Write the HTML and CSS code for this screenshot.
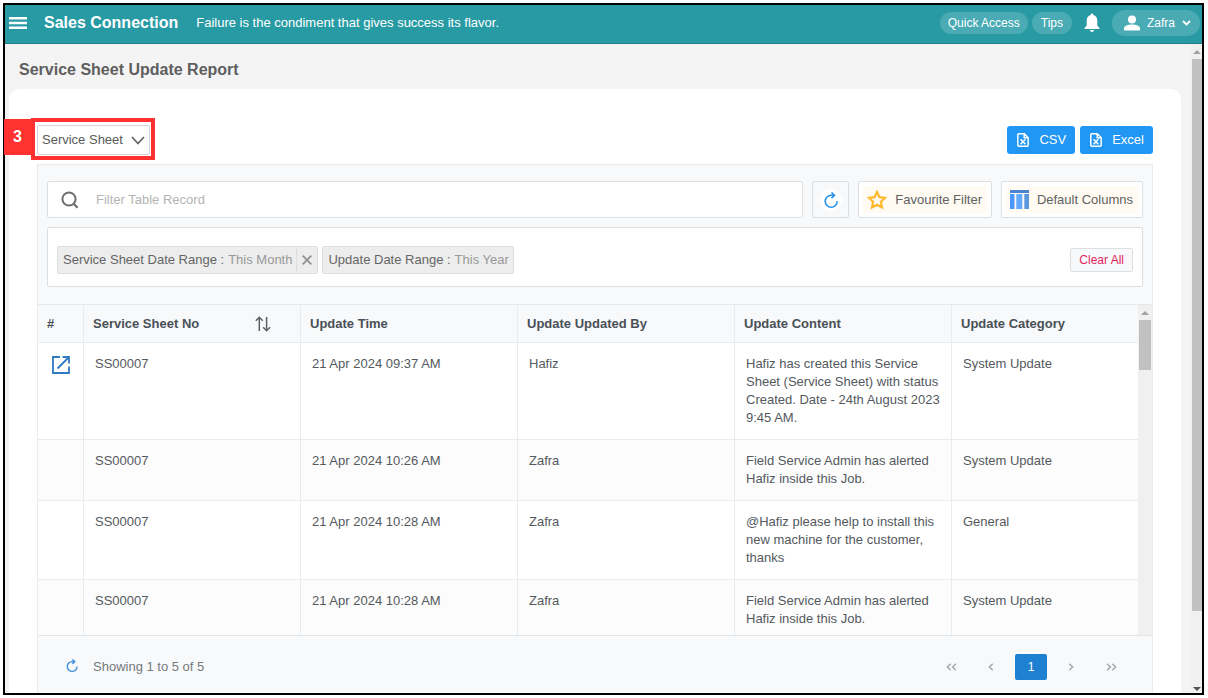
FILE: index.html
```html
<!DOCTYPE html>
<html lang="en">
<head>
<meta charset="utf-8">
<title>Service Sheet Update Report</title>
<link rel="stylesheet" href="styles.css">
</head>
<body>
<div class="frame">
  <header class="topbar">
    <button class="menu" aria-label="Menu"><svg width="18" height="12" viewBox="0 0 18 12"><path d="M0 1.300h18M0 6h18M0 10.700h18" stroke="#fff" stroke-width="2.600"/></svg></button>
    <a class="brand" href="#">Sales Connection</a>
    <p class="tagline">Failure is the condiment that gives success its flavor.</p>
    <nav class="topnav">
      <button class="pill quick">Quick Access</button>
      <button class="pill tips">Tips</button>
      <button class="bell" aria-label="Notifications"><svg width="16" height="20" viewBox="0 0 16 20"><path d="M8 0.5c.9 0 1.3.6 1.3 1.5 2.6.7 4 2.8 4 5.4v5l2.2 2.6v1H.5v-1l2.2-2.6v-5C2.700 4.800 4.100 2.700 6.700 2c0-.9.4-1.500 1.300-1.500zM6 17h4c0 1.300-.9 2-2 2s-2-.7-2-2z" fill="#fff"/></svg></button>
      <button class="pill user">
        <svg width="16" height="16" viewBox="0 0 16 16"><circle cx="8" cy="4.500" r="4" fill="#fff"/><path d="M0 15.500v-2c0-2.600 4-4 8-4s8 1.400 8 4v2z" fill="#fff"/></svg>
        <span>Zafra</span>
        <svg width="9" height="6" viewBox="0 0 9 6"><path d="M1 1l3.500 3.500L8 1" fill="none" stroke="#fff" stroke-width="1.800"/></svg>
      </button>
    </nav>
  </header>
  <div class="body">
    <main class="page">
      <h1>Service Sheet Update Report</h1>
      <section class="card">
        <div class="actions">
          <div class="picker">
            <select aria-label="Report type"><option>Service Sheet</option></select>
            <svg class="caret" width="14" height="9" viewBox="0 0 14 9"><path d="M1 1l6 6.500L13 1" fill="none" stroke="#666" stroke-width="1.800"/></svg>
            <span class="outline"></span>
            <span class="step">3</span>
          </div>
          <div class="exports">
            <button class="export"><svg width="12" height="14" viewBox="0 0 12 14" fill="none" stroke="#fff" stroke-width="1.500"><path d="M2 .8h5.300L11.200 4.700V12.200a1 1 0 0 1-1 1H1.800a1 1 0 0 1-1-1V1.800a1 1 0 0 1 1-1zM7.200 1v3.800H11"/><path d="M3.600 6.300l4.800 5M8.400 6.300l-4.800 5"/></svg>CSV</button>
            <button class="export"><svg width="12" height="14" viewBox="0 0 12 14" fill="none" stroke="#fff" stroke-width="1.500"><path d="M2 .8h5.300L11.200 4.700V12.200a1 1 0 0 1-1 1H1.800a1 1 0 0 1-1-1V1.800a1 1 0 0 1 1-1zM7.200 1v3.800H11"/><path d="M3.600 6.300l4.800 5M8.400 6.300l-4.800 5"/></svg>Excel</button>
          </div>
        </div>
        <div class="panel">
          <div class="tools">
            <div class="searchrow">
              <label class="search">
                <svg width="18" height="18" viewBox="0 0 18 18" fill="none" stroke="#6e6e6e"><circle cx="8" cy="8" r="6.600" stroke-width="2"/><path d="M12.600 12.800l4 4" stroke-width="2.200"/></svg>
                <input type="text" placeholder="Filter Table Record" aria-label="Filter Table Record">
              </label>
              <button class="refresh" aria-label="Refresh"><span class="disc"><svg width="14" height="16" viewBox="0 0 14 16" fill="none" stroke="#2492ec" stroke-width="1.600"><path d="M13.200 9.200A6 6 0 1 1 7.200 3.200h3"/><path d="M7.500.5l2.900 2.700-2.900 2.900"/></svg></span></button>
              <button class="tool"><span class="fill"><svg width="20" height="20" viewBox="0 0 20 20"><path d="M10 2l2.400 5.200 5.600.7-4.100 3.900 1.100 5.700-5-2.800-5 2.800 1.100-5.700L2 7.900l5.600-.7z" fill="none" stroke="#ffb92e" stroke-width="2.200"/></svg>Favourite Filter</span></button>
              <button class="tool wide"><span class="fill"><svg width="19" height="19" viewBox="0 0 19 19"><path d="M0 0h19v3H0z" fill="#4a86cf"/><path d="M0 4h4.500v15H0z" fill="#4a98ff"/><path d="M6.300 4h6v15h-6z" fill="#62aaff"/><path d="M14.300 4H19v15h-4.700z" fill="#5a97df"/></svg>Default Columns</span></button>
            </div>
            <div class="filters">
              <span class="chip"><span class="name">Service Sheet Date Range :</span><span class="val">This Month</span><button class="close" aria-label="Remove filter"><svg width="10" height="10" viewBox="0 0 10 10"><path d="M.7.7l8.600 8.600M9.300.7L.7 9.300" stroke="#929292" stroke-width="1.800"/></svg></button></span>
              <span class="chip"><span class="name">Update Date Range :</span><span class="val">This Year</span></span>
              <button class="clear">Clear All</button>
            </div>
          </div>
          <div class="tablebox">
            <div class="viewport">
              <table>
                <colgroup><col class="num"><col class="std"><col class="std"><col class="std"><col class="std"><col></colgroup>
                <thead><tr>
                  <th>#</th>
                  <th><div class="sort"><span>Service Sheet No</span><svg width="16" height="16" viewBox="0 0 16 16" fill="none" stroke="#5b6067" stroke-width="1.500"><path d="M4.300 15V1.500M.8 4.700l3.500-3.500 3.500 3.500M11.600 1v13.500M8.200 11.300l3.400 3.500 3.500-3.500"/></svg></div></th>
                  <th>Update Time</th><th>Update Updated By</th><th>Update Content</th><th>Update Category</th>
                </tr></thead>
                <tbody>
                  <tr><td class="open"><a href="#" aria-label="Open record"><svg width="18" height="18" viewBox="0 0 18 18" fill="none" stroke="#2f79c2" stroke-width="1.800"><path d="M8 1H1v16h16v-6.500M10.500 1H17v6.500M17 1L5.500 12.500"/></svg></a></td><td>SS00007</td><td>21 Apr 2024 09:37 AM</td><td>Hafiz</td><td>Hafiz has created this Service Sheet (Service Sheet) with status Created. Date - 24th August 2023 9:45 AM.</td><td>System Update</td></tr>
                  <tr><td></td><td>SS00007</td><td>21 Apr 2024 10:26 AM</td><td>Zafra</td><td>Field Service Admin has alerted Hafiz inside this Job.</td><td>System Update</td></tr>
                  <tr><td></td><td>SS00007</td><td>21 Apr 2024 10:28 AM</td><td>Zafra</td><td>@Hafiz please help to install this new machine for the customer, thanks</td><td>General</td></tr>
                  <tr><td></td><td>SS00007</td><td>21 Apr 2024 10:28 AM</td><td>Zafra</td><td>Field Service Admin has alerted Hafiz inside this Job.</td><td>System Update</td></tr>
                </tbody>
              </table>
            </div>
            <div class="bar inner"><i class="up"></i><i class="thumb"></i></div>
          </div>
          <footer class="foot">
            <button class="again" aria-label="Reload"><svg width="12" height="13" viewBox="0 0 14 16" fill="none" stroke="#3c8edb" stroke-width="1.700"><path d="M13.200 9.200A6 6 0 1 1 7.200 3.200h3"/><path d="M7.500.5l2.900 2.700-2.900 2.900"/></svg></button>
            <span>Showing 1 to 5 of 5</span>
            <nav class="pager">
              <button aria-label="First page"><svg width="11" height="8" viewBox="0 0 11 8"><path d="M4.700.7L1.400 4l3.300 3.300M9.900.7L6.600 4l3.300 3.300"/></svg></button>
              <button aria-label="Previous page"><svg width="6" height="8" viewBox="0 0 6 8"><path d="M4.700.7L1.400 4l3.300 3.300"/></svg></button>
              <button class="current">1</button>
              <button aria-label="Next page"><svg width="6" height="8" viewBox="0 0 6 8"><path d="M1.300.7L4.600 4 1.300 7.300"/></svg></button>
              <button aria-label="Last page"><svg width="11" height="8" viewBox="0 0 11 8"><path d="M1.100.7L4.400 4 1.100 7.300M6.300.7L9.600 4 6.300 7.300"/></svg></button>
            </nav>
          </footer>
        </div>
      </section>
    </main>
    <div class="bar outer"><i class="up"></i><i class="thumb"></i><i class="down"></i></div>
  </div>
</div>
</body>
</html>
```
FILE: styles.css
```css
* { box-sizing: border-box; }
body {
  margin: 0;
  padding: 3px 4px 3px 3px;
  height: 100vh;
  background: #fff;
  color: #54595e;
  font: 13px/18px "Liberation Sans", Arial, sans-serif;
}
button { font: inherit; color: inherit; border: 0; background: none; padding: 0; display: flex; align-items: center; justify-content: center; }
svg { display: block; flex: none; }
a { color: inherit; text-decoration: none; }

.frame { height: 100%; border: 2px solid #000; display: flex; flex-direction: column; }
.topbar { flex: none; height: 39px; background: #289aa4; border-bottom: 1px solid #218089; color: #fff; display: flex; align-items: center; padding: 0 2px 3px 4px; }
.brand { font-size: 16px; font-weight: bold; margin-left: 17px; }
.tagline { margin: 0 0 0 18px; }
.topnav { margin-left: auto; display: flex; align-items: center; }
.pill { background: #4aabb4; border-radius: 14px; height: 22px; padding: 0 9px; font-size: 12px; }
.quick { padding: 0 8px; }
.tips { margin-left: 4px; }
.bell { margin: 0 12px; }
.user { height: 26px; padding: 0 9px 0 12px; gap: 7px; }

.body { flex: 1; min-height: 0; display: flex; }
.page { flex: 1; min-width: 0; background: #f4f4f4; padding: 0 10px 0 4px; display: flex; flex-direction: column; }
h1 { flex: none; margin: 0; padding: 16px 10px 0; height: 45px; font-size: 16px; line-height: 20px; color: #5e5e5e; }
.card { flex: 1; min-height: 0; background: #fff; border-radius: 10px 10px 0 0; padding: 36px 28px 0; display: flex; flex-direction: column; }
.actions { flex: none; display: flex; justify-content: space-between; height: 39px; }
.picker { position: relative; height: 30px; }
.picker select { appearance: none; font: inherit; color: #5a5a5a; background: #fff; border: 1px solid #d3d5d8; border-radius: 2px; height: 30px; width: 113px; padding: 0 4px; }
.caret { position: absolute; right: 5px; top: 11px; }
.outline { position: absolute; inset: -7px -5px -5px -6px; border: 4px solid #ff3131; }
.step { position: absolute; right: 100%; top: -6px; margin-right: 6px; width: 27px; height: 36px; background: #ff3131; color: #fff; font-size: 16px; font-weight: bold; line-height: 36px; text-align: center; }
.exports { display: flex; gap: 5px; padding-top: 1px; }
.export { height: 28px; background: #2196f3; border-radius: 3px; color: #fff; padding: 0 9px 0 10px; gap: 10px; }

.panel { flex: 1; min-height: 0; border: 1px solid #e9ecef; border-bottom: 0; background: #f8f9fa; display: flex; flex-direction: column; }
.tools { flex: none; padding: 16px 9px 17px; display: flex; flex-direction: column; gap: 9px; }
.searchrow { display: flex; gap: 9px; height: 37px; }
.search { flex: 1; display: flex; align-items: center; gap: 17px; padding-left: 13px; background: #fff; border: 1px solid #dedfe1; border-radius: 2px; }
.search input { flex: 1; min-width: 0; border: 0; outline: 0; background: none; font: inherit; padding: 0; }
.search input::placeholder { color: #b4b4b4; opacity: 1; }
.refresh { width: 37px; border: 1px solid #dedfe1; border-radius: 2px; }
.disc { display: flex; align-items: center; justify-content: center; width: 22px; height: 22px; border-radius: 50%; background: #fff; }
.tool { background: #fff; border: 1px solid #dedfe1; border-radius: 2px; color: #616161; padding: 0 4px; width: 134px; }
.wide { width: 142px; }
.fill { display: flex; align-items: center; justify-content: space-between; flex: 1; height: 27px; background: #fffbf3; padding: 0 5px 0 4px; }
.filters { height: 60px; background: #fff; border: 1px solid #dedfe1; border-radius: 2px; padding: 5px 9px 0; display: flex; align-items: center; gap: 4px; }
.chip { display: flex; align-items: center; height: 28px; background: #ededed; border: 1px solid #dedede; border-radius: 2px; padding: 0 4px 0 5px; color: #656565; }
.val { color: #999; margin-left: 4px; }
.close { width: 21px; height: 26px; margin: 0 -4px 0 4px; border-left: 1px solid #dedede; }
.clear { margin-left: auto; height: 24px; padding: 0 8px; font-size: 12px; color: #e0245e; background: #f8f9fa; border: 1px solid #dedfe1; border-radius: 2px; }

.tablebox { flex: 1; min-height: 0; display: flex; border-top: 1px solid #e6e8eb; border-bottom: 1px solid #e2e5e8; }
.viewport { flex: 1; min-width: 0; overflow: hidden; background: #fff; }
table { width: 100%; table-layout: fixed; border-collapse: separate; border-spacing: 0; }
.num { width: 46px; }
.std { width: 217px; }
th, td { border-right: 1px solid #e9ecef; border-bottom: 1px solid #e9ecef; text-align: left; }
th:last-child, td:last-child { border-right: 0; }
th { height: 38px; padding: 0 9px; background: #f8f9fa; color: #495057; }
.sort { display: flex; align-items: center; justify-content: space-between; padding-right: 20px; }
td { padding: 12px 8px 12px 11px; vertical-align: top; }
td.open { padding: 13px 0 0 14px; }
tbody tr:nth-child(even) { background: #fcfcfc; }

.foot { flex: none; height: 57px; display: flex; align-items: center; padding: 5px 25px 0 28px; color: #74797e; }
.again { margin-right: 15px; padding-bottom: 4px; }
.pager { margin-left: auto; display: flex; align-items: center; gap: 8px; }
.pager button { width: 32px; height: 26px; border-radius: 2px; font-size: 12px; }
.pager svg { fill: none; stroke: #a6abb0; stroke-width: 1.6; }
.pager .current { background: #1e80d0; color: #fff; }

.bar { flex: none; display: flex; flex-direction: column; align-items: center; background: #f0f0f0; }
.inner { width: 14px; }
.outer { width: 11px; }
.up { margin: 6px 0 5px; border: 4px solid transparent; border-top: 0; border-bottom: 4px solid #a3a3a3; }
.down { margin: auto 0 2px; border: 4px solid transparent; border-bottom: 0; border-top: 4px solid #505050; }
.thumb { background: #c1c1c1; width: 12px; height: 15%; }
.outer .thumb { width: 10px; height: 85%; }
```
